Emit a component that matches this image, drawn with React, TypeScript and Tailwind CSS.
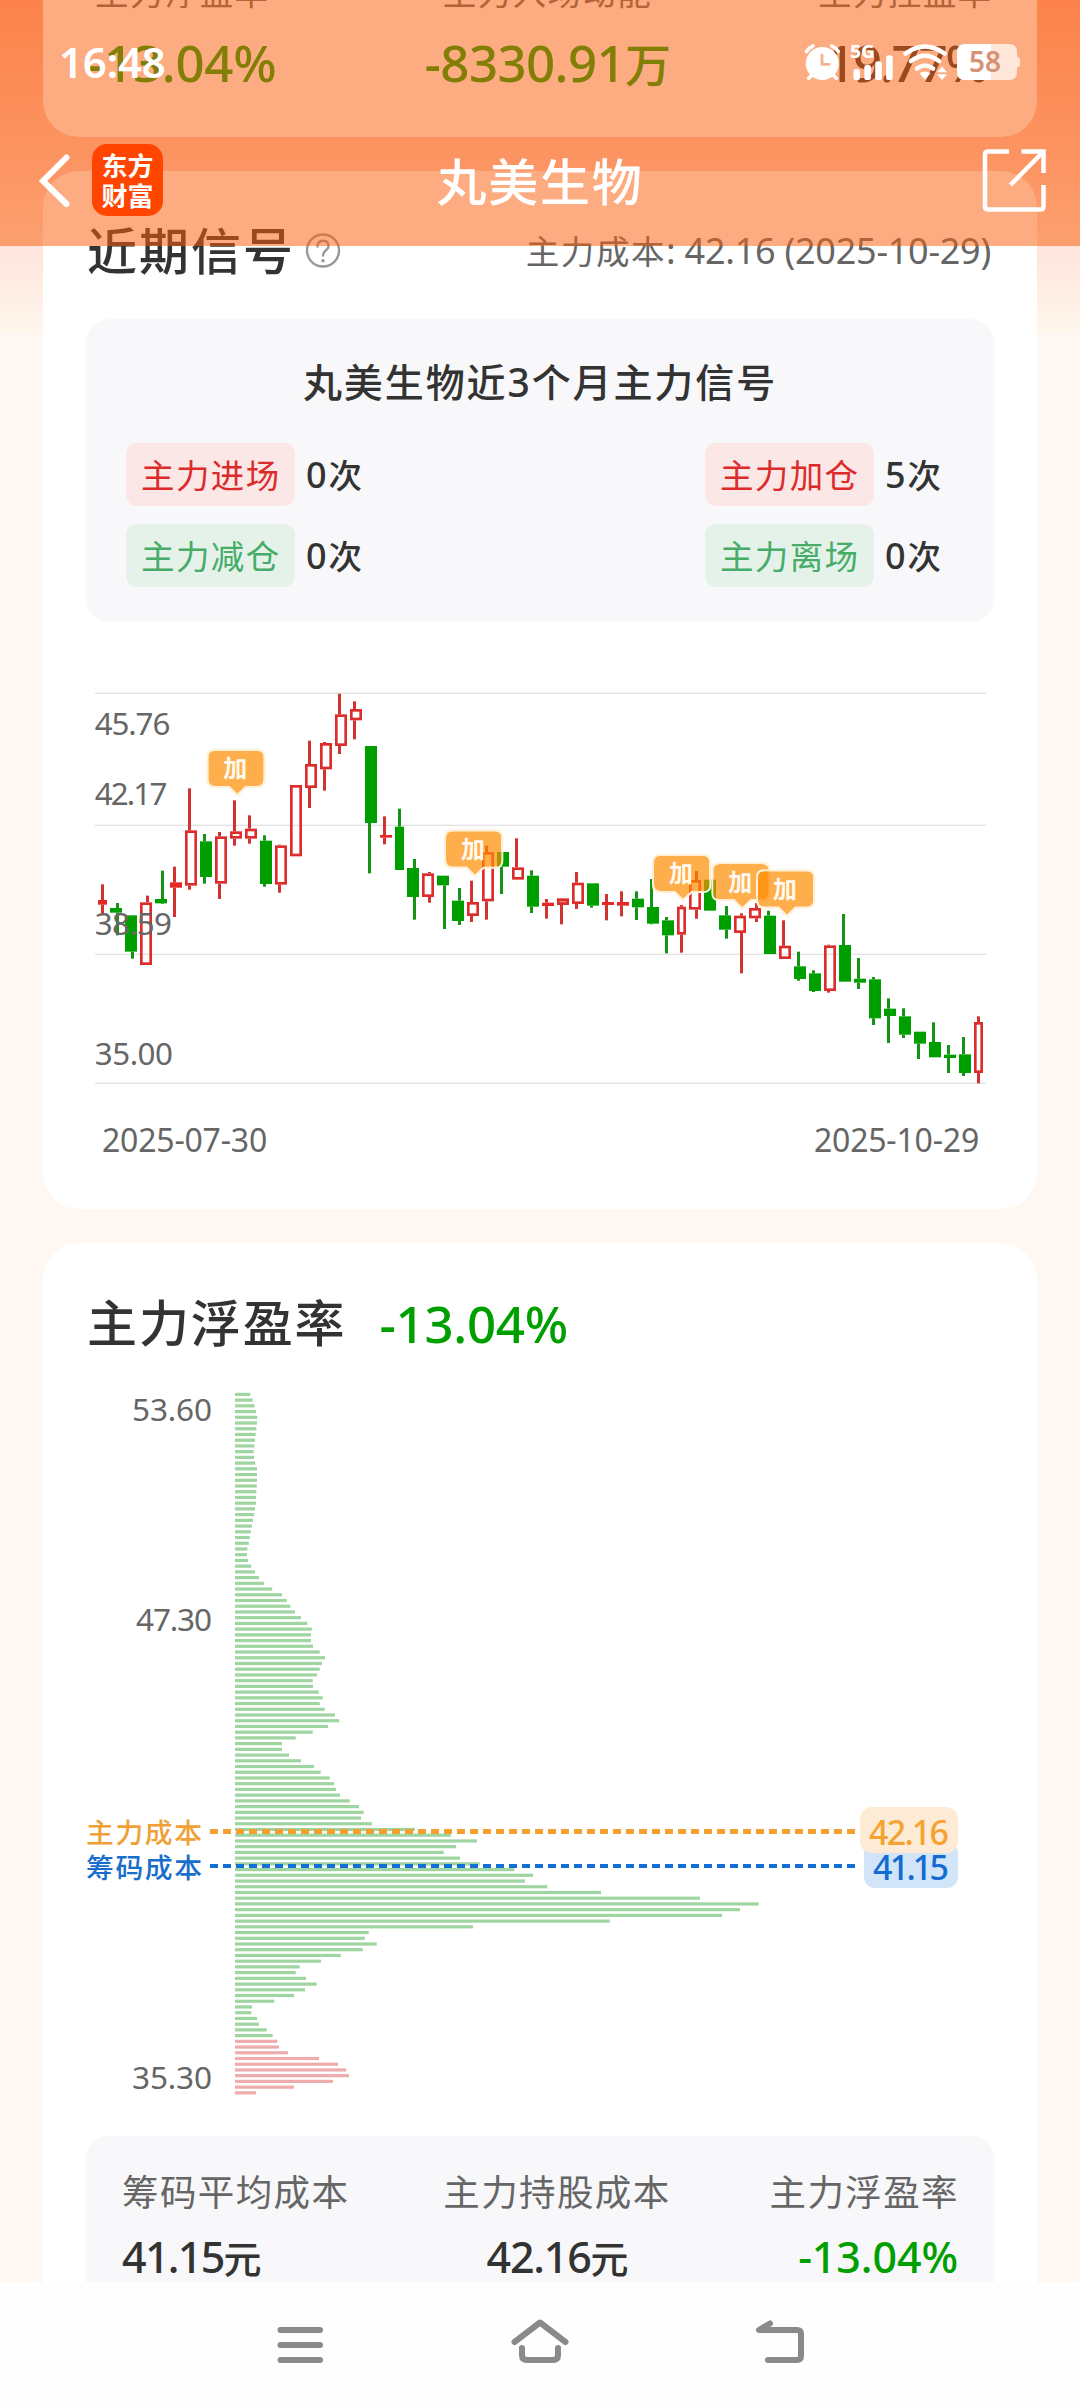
import React from "react";

type Kind = "g" | "h" | "f" | "p";
// [kind, body top, body bottom, high, low] in thirds of a pixel
const candles: [Kind, number, number, number, number][] = [
  ["f", 660, 674, 613, 706],
  ["g", 684, 698, 669, 766],
  ["g", 706, 815, 706, 836],
  ["h", 667, 855, 647, 855],
  ["g", 657, 670, 572, 672],
  ["f", 607, 623, 560, 711],
  ["h", 451, 617, 325, 629],
  ["g", 484, 591, 462, 611],
  ["h", 469, 611, 456, 657],
  ["h", 454, 476, 361, 497],
  ["h", 446, 476, 406, 491],
  ["g", 482, 612, 466, 620],
  ["h", 496, 614, 494, 638],
  ["h", 315, 529, 315, 529],
  ["h", 252, 324, 182, 384],
  ["h", 189, 268, 186, 332],
  ["h", 103, 198, 41, 222],
  ["h", 87, 121, 64, 178],
  ["g", 198, 429, 198, 580],
  ["f", 465, 473, 409, 493],
  ["g", 440, 570, 386, 570],
  ["g", 564, 651, 537, 719],
  ["h", 580, 651, 576, 668],
  ["g", 587, 616, 587, 747],
  ["g", 662, 723, 624, 735],
  ["h", 666, 708, 602, 726],
  ["h", 516, 664, 497, 719],
  ["g", 516, 560, 516, 642],
  ["h", 562, 599, 475, 599],
  ["g", 587, 680, 571, 699],
  ["f", 668, 678, 657, 716],
  ["p", 655, 675, 655, 733],
  ["h", 608, 672, 576, 687],
  ["g", 610, 677, 610, 683],
  ["f", 666, 675, 642, 721],
  ["f", 666, 677, 634, 709],
  ["g", 656, 682, 634, 720],
  ["g", 681, 731, 597, 733],
  ["g", 721, 766, 711, 820],
  ["h", 680, 764, 675, 818],
  ["h", 600, 689, 573, 716],
  ["g", 599, 692, 599, 692],
  ["g", 706, 749, 678, 776],
  ["h", 707, 759, 700, 880],
  ["h", 684, 715, 669, 726],
  ["g", 707, 822, 692, 822],
  ["h", 797, 837, 721, 837],
  ["g", 859, 897, 815, 902],
  ["g", 880, 933, 871, 936],
  ["h", 796, 933, 794, 938],
  ["g", 795, 905, 702, 905],
  ["g", 896, 908, 834, 927],
  ["g", 898, 1015, 891, 1035],
  ["g", 986, 1008, 955, 1089],
  ["g", 1009, 1064, 985, 1074],
  ["g", 1055, 1091, 1055, 1137],
  ["g", 1086, 1132, 1027, 1132],
  ["g", 1124, 1134, 1095, 1179],
  ["g", 1123, 1179, 1071, 1188],
  ["h", 1026, 1179, 1009, 1210],
];
const narrow = [0, 20, 39, 59];
const shifted = [1, 2, 3, 4, 21, 22, 23, 24, 40, 41, 42, 43, 44];
const badges = [
  [385, 212],
  [1098, 454],
  [1722, 527],
  [1900, 552],
  [2034, 574],
];
const gridLines = [40, 436, 823, 1210];
const priceLabels: [string, number, number][] = [
  ["45.76", 164, 227],
  ["42.17", 374, 218],
  ["38.59", 764, 232],
  ["35.00", 1154, 235],
];

const chips = [
  15.2, 17.6, 19.6, 21, 22.4, 22, 21.3, 20.7, 20, 19.3, 18.6, 19, 20.3, 22, 22, 22, 21.7, 21.3, 21, 21, 20, 19, 18, 17,
  15.8, 14.8, 13.8, 12.4, 12, 13, 16.2, 20, 24, 29, 37.2, 47, 51.7, 55.4, 60, 66, 72.3, 76.8, 76, 76, 78, 84.7, 90, 87,
  84.7, 82, 77.7, 78, 83.7, 87.7, 84.7, 89.7, 100, 104.3, 93, 77.7, 60.7, 47, 47, 54, 66, 79, 85.7, 94.7, 99, 101, 105,
  114.7, 124, 128.7, 126, 137, 180, 215.7, 242, 221, 208.7, 225, 244.7, 279.3, 298, 290, 312.3, 366, 465, 523.7, 505,
  487, 374.7, 238, 133.7, 129.7, 141.7, 127.7, 105.7, 86, 64.7, 60.7, 71, 81.7, 70, 59, 39.3, 17, 16.3, 22, 24, 31.7,
  37.7, 42.3, 44, 53, 84, 103, 111.3, 114, 98, 59, 21,
];

const NUM = "'Noto Sans', 'Noto Sans CJK SC', sans-serif";

function KLine() {
  return (
    <svg className="block h-[410px] w-[891px]" viewBox="45 0 2673 1230" fontFamily={NUM}>
      {gridLines.map((y) => (
        <rect key={y} x={45} y={y - 2} width={2673} height={4} fill="#e2e2e2" />
      ))}
      {candles.map(([k, t, b, h, l], i) => {
        const x = i === 0 ? 54 : 45 + 45 * i - (i > 20 ? 9 : 0) - (i > 39 ? 9 : 0);
        const w = narrow.includes(i) ? 27 : 36;
        const wx = x + (shifted.includes(i) ? 18 : 9);
        const green = k === "g";
        const wick = green ? "#149314" : "#d23230";
        return (
          <g key={i}>
            {h < t && <rect x={wx} y={h} width={9} height={t - h} fill={wick} />}
            {l > b && <rect x={wx} y={b} width={9} height={l - b} fill={wick} />}
            {green && <rect x={x} y={t} width={w} height={b - t} fill="#009f00" />}
            {k === "f" && <rect x={x} y={t} width={w} height={b - t} fill="#e82626" />}
            {(k === "h" || k === "p") && (
              <rect
                x={x + 4}
                y={t + 4}
                width={w - 8}
                height={b - t - 8}
                fill={k === "p" ? "#f67c7c" : "none"}
                stroke="#dc2d2c"
                strokeWidth={8}
              />
            )}
          </g>
        );
      })}
      {badges.map(([x, y]) => (
        <g key={x} transform={`translate(${x} ${y})`}>
          <path
            d="M20 0H146Q166 0 166 20V86Q166 106 146 106H111L87 130L63 106H20Q0 106 0 86V20Q0 0 20 0Z"
            fill="#ff8b00"
            fillOpacity={0.7}
          />
          <path
            d="M18 -3H148Q169 -3 169 18V88Q169 109 148 109H113L87 134L61 109H18Q-3 109 -3 88V18Q-3 -3 18 -3Z"
            fill="none"
            stroke="#fff1d9"
            strokeWidth={6}
          />
          <text x={81} y={80} fontSize={72} fontWeight={700} fill="#fffaf0" textAnchor="middle">
            加
          </text>
        </g>
      ))}
      {priceLabels.map(([s, y, w]) => (
        <text key={s} x={44} y={y} fontSize={94} fill="#666" textLength={w} lengthAdjust="spacing">
          {s}
        </text>
      ))}
    </svg>
  );
}

function ChipChart() {
  return (
    <svg className="block h-[736px] w-[908px]" viewBox="86 1380 908 736" fontFamily={NUM}>
      {chips.map((w, i) => (
        <rect
          key={i}
          x={235}
          y={1394.4 + i * 5.725 - 1.6}
          width={w}
          height={3.2}
          fill={i > 112 ? "#eeacac" : "#9fd5a0"}
        />
      ))}
      <g fontSize={31.5} fill="#666">
        <text x={132} y={1421} textLength={80} lengthAdjust="spacing">53.60</text>
        <text x={136} y={1631} textLength={76} lengthAdjust="spacing">47.30</text>
        <text x={132} y={2089} textLength={80} lengthAdjust="spacing">35.30</text>
      </g>
      <line x1={210} x2={858} y1={1831.5} y2={1831.5} stroke="#f5a02e" strokeWidth={5} strokeDasharray="8 5" />
      <line x1={210} x2={858} y1={1866} y2={1866} stroke="#116fd5" strokeWidth={4} strokeDasharray="8 5" />
      <g fontSize={27.8} fontWeight={500} fontFamily="'Noto Sans CJK SC', sans-serif">
        <text x={86} y={1842.5} fill="#f0a136" textLength={116} lengthAdjust="spacing">主力成本</text>
        <text x={86} y={1877.5} fill="#1a6ecb" textLength={116} lengthAdjust="spacing">筹码成本</text>
      </g>
      <rect x={864} y={1842} width={94} height={46} rx={11} fill="#d2e5f8" />
      <rect x={860} y={1807} width={98} height={46} rx={12} fill="#feebd5" />
      <g fontSize={34} fontWeight={500}>
        <text x={869} y={1844.5} fill="#f5a231" textLength={80} lengthAdjust="spacing">42.16</text>
        <text x={873} y={1879.5} fill="#136cd0" textLength={76} lengthAdjust="spacing">41.15</text>
      </g>
    </svg>
  );
}

function Signal({ label, count, tone }: { label: string; count: string; tone: "red" | "green" }) {
  const color = tone === "red" ? "bg-[#fae7e6] text-[#dd2b2b]" : "bg-[#e5f2ea] text-[#46ac68]";
  return (
    <div className="flex h-[63px] items-center gap-[11px]">
      <div
        className={`h-[63px] w-[169px] rounded-[11px] pl-[15px] text-[33.5px] leading-[64px] tracking-[1.4px] ${color}`}
      >
        {label}
      </div>
      <div className="text-[33.5px] leading-[64px] font-medium text-[#333]">
        <span className="mr-[2px] text-[36px]">{count}</span>次
      </div>
    </div>
  );
}

function StatusIcons() {
  return (
    <svg className="block h-[40px] w-[220px]" viewBox="802 42 220 40" fill="#fff" fontFamily={NUM}>
      <circle cx={822.3} cy={63.5} r={16.6} />
      <g stroke="#fff" strokeWidth={3.6} strokeLinecap="round" fill="none">
        <path d="M806.5 51.5Q808.5 48 813 45.8" />
        <path d="M838.3 51.5Q836.3 48 831.8 45.8" />
        <path d="M811.5 75.5L808.7 78.2M833.5 75.5L836.3 78.2" />
      </g>
      <path d="M822 55V64.3H829" fill="none" stroke="#f6b18f" strokeWidth={2.8} strokeLinecap="round" />
      <text x={850} y={58} fontSize={17.5} fontWeight={800} textLength={25} lengthAdjust="spacingAndGlyphs">5G</text>
      <rect x={853.4} y={69} width={6.6} height={11} rx={2.6} />
      <rect x={864.3} y={65} width={6.6} height={15} rx={2.6} />
      <rect x={875.2} y={61.3} width={6.6} height={18.7} rx={2.6} />
      <rect x={886.1} y={55.3} width={6.6} height={24.7} rx={2.6} />
      <g fill="none" stroke="#fff" strokeWidth={4.6} strokeLinecap="round">
        <path d="M905.5 53.5Q925 39.5 944.5 53.5" />
        <path d="M911 61Q925 50.5 939 61" />
        <path d="M917 68.5Q925 62.5 933 68.5" />
      </g>
      <path d="M919.5 73Q925 70 930.5 73L926.3 78.5Q925 80 923.7 78.5Z" />
      <path d="M942 66.5L947 72.3H937ZM942 80L947 74.3H937Z" />
      <path d="M965 44H991V80H965Q957 80 957 72V52Q957 44 965 44Z" />
      <path
        d="M991 44H1009Q1017 44 1017 52V56.5Q1020 57 1020 60V64Q1020 67 1017 67.5V72Q1017 80 1009 80H991Z"
        fillOpacity={0.7}
      />
      <text x={969} y={71.7} fontSize={28} fontWeight={600} fill="#d59277">58</text>
    </svg>
  );
}

export default function App() {
  return (
    <div className="relative flex h-[2408px] w-[1080px] flex-col overflow-hidden bg-[#fff8f2] font-['Noto_Sans','Noto_Sans_CJK_SC',sans-serif]">
      <main className="flex min-h-0 flex-1 flex-col gap-[34px] overflow-hidden bg-[linear-gradient(180deg,#ffa890_0px,#ffe4dc_246px,#fff6ec_330px,#fff8f2_335px)] px-[43px]">
        <section className="flex h-[137px] shrink-0 justify-between overflow-hidden rounded-b-[36px] bg-white pr-[46px] pl-[46px]">
          <div className="-mt-[31px] w-[190px]">
            <div className="pl-[6px] text-[33.5px] leading-[46px] tracking-[1.4px] whitespace-nowrap text-[#666]">主力浮盈率</div>
            <div className="mt-[19px] -ml-[1px] text-[51px] leading-[56px] font-medium tracking-[-0.3px] whitespace-nowrap text-[#009f00]">-13.04%</div>
          </div>
          <div className="-mt-[31px] w-[252px] text-center">
            <div className="text-[33.5px] leading-[46px] tracking-[1.4px] whitespace-nowrap text-[#666]">主力入场动能</div>
            <div className="mt-[19px] text-[51px] leading-[56px] font-medium tracking-[-0.6px] whitespace-nowrap text-[#009f00]">
              -8330.91<span className="text-[46px]">万</span>
            </div>
          </div>
          <div className="-mt-[31px] w-[175px]">
            <div className="pl-[2px] text-[33.5px] leading-[46px] tracking-[1.4px] whitespace-nowrap text-[#666]">主力控盘率</div>
            <div className="mt-[19px] pl-[10px] text-[51px] leading-[56px] font-medium tracking-[-2.2px] whitespace-nowrap text-[#333]">19.77%</div>
          </div>
        </section>

        <section className="flex h-[1038px] shrink-0 flex-col rounded-[36px] bg-white px-[43px]">
          <div className="mt-[51px] flex h-[58px] items-center">
            <h2 className="pl-px text-[50px] leading-[58px] font-medium tracking-[2px] whitespace-nowrap text-[#333]">近期信号</h2>
            <svg className="ml-[10px] h-[36px] w-[36px]" viewBox="0 0 36 36" fill="none" stroke="#999" strokeWidth={2.4}>
              <circle cx={18} cy={17.5} r={16} />
              <path d="M12.5 13.5Q12.5 7.800 18 7.800Q23.5 7.8 23.5 13Q23.5 15.5 20.5 17.7Q18 19.5 18 22.5" strokeLinecap="round" />
              <circle cx={18} cy={27.8} r={1.8} fill="#999" stroke="none" />
            </svg>
            <div className="ml-auto pr-[3px] text-[36px] leading-[58px] tracking-[-0.25px] whitespace-nowrap text-[#666]">
              <span className="text-[33.5px] tracking-[1.6px]">主力成本</span>: 42.16 (2025-10-29)
            </div>
          </div>

          <div className="mt-[39px] h-[303px] shrink-0 rounded-[24px] bg-[#f8f8fa]">
            <h3 className="mt-[34px] text-center text-[39px] leading-[58px] font-medium tracking-[1.9px] text-[#333]">
              丸美生物近3个月主力信号
            </h3>
            <div className="mt-[32px] flex justify-between pr-[53px] pl-[40px]">
              <div className="flex flex-col gap-[18px]">
                <Signal label="主力进场" count="0" tone="red" />
                <Signal label="主力减仓" count="0" tone="green" />
              </div>
              <div className="flex flex-col gap-[18px]">
                <Signal label="主力加仓" count="5" tone="red" />
                <Signal label="主力离场" count="0" tone="green" />
              </div>
            </div>
          </div>

          <div className="mt-[58px] pl-[9px]">
            <KLine />
          </div>
          <div className="mt-[28px] flex justify-between pr-[15px] pl-[16px] text-[32px] leading-[44px] tracking-[-0.2px] text-[#666]">
            <span>2025-07-30</span>
            <span>2025-10-29</span>
          </div>
        </section>

        <section className="flex h-[1140px] shrink-0 flex-col rounded-t-[36px] bg-white px-[43px]">
          <div className="mt-[50px] flex h-[60px] items-center gap-[33px]">
            <h2 className="pl-px text-[50px] leading-[60px] font-medium tracking-[1.9px] text-[#333]">主力浮盈率</h2>
            <span className="text-[51px] leading-[60px] font-medium tracking-[-0.3px] text-[#009f00]">-13.04%</span>
          </div>
          <div className="mt-[27px]">
            <ChipChart />
          </div>
          <div className="mt-[20px] flex h-[220px] shrink-0 justify-between rounded-t-[22px] bg-[#f8f8fa] px-[36px] pt-[33px] whitespace-nowrap">
            <div>
              <div className="text-[36.5px] leading-[46px] tracking-[1.4px] text-[#666]">筹码平均成本</div>
              <div className="mt-[19px] text-[43px] leading-[46px] font-medium tracking-[-1.7px] text-[#333]">
                41.15<span className="text-[38px]">元</span>
              </div>
            </div>
            <div className="-ml-[5px] text-center">
              <div className="text-[36.5px] leading-[46px] tracking-[1.4px] text-[#666]">主力持股成本</div>
              <div className="mt-[19px] text-[43px] leading-[46px] font-medium tracking-[-1.2px] text-[#333]">
                42.16<span className="text-[38px]">元</span>
              </div>
            </div>
            <div className="text-right">
              <div className="-mr-[1px] text-[36.5px] leading-[46px] tracking-[1.4px] text-[#666]">主力浮盈率</div>
              <div className="mt-[19px] text-[43px] leading-[46px] font-medium tracking-[-0.1px] text-[#009f00]">-13.04%</div>
            </div>
          </div>
        </section>
      </main>

      <header className="absolute inset-x-0 top-0 flex h-[246px] flex-col bg-[rgba(249,95,11,0.52)] text-white">
        <div className="mt-[40px] flex h-[44px] items-center justify-between pr-[58px] pl-[59px]">
          <span className="text-[42px] leading-[44px] font-semibold tracking-[-0.2px]">16:48</span>
          <StatusIcons />
        </div>
        <div className="mt-[60px] grid h-[72px] grid-cols-[1fr_auto_1fr] items-center pr-[34px] pl-[39px]">
          <div className="flex items-center gap-[22px]">
            <svg className="h-[54px] w-[31px]" viewBox="0 0 31 54" fill="none" stroke="#fff" strokeWidth={6}>
              <path d="M27.5 4.500L4 28L27.5 51" strokeLinecap="round" strokeLinejoin="miter" />
            </svg>
            <div className="flex h-[72px] w-[71px] flex-col items-center justify-center rounded-[15px] bg-[#ff4500] pb-px font-['Noto_Sans_CJK_SC',sans-serif] text-[26px] leading-[30px] font-bold">
              <span>东方</span>
              <span>财富</span>
            </div>
          </div>
          <h1 className="mr-[5px] text-[50px] leading-[60px] font-medium tracking-[1.7px]">
            <span className="relative top-[2px]">丸美生物</span>
          </h1>
          <svg className="h-[64px] w-[64px] justify-self-end" viewBox="982 148 64 64" fill="none" stroke="#fff" strokeWidth={4.5}>
            <path d="M1009 151.5H988Q985 151.5 985 154.5V206.5Q985 209.5 988 209.5H1040.5Q1043.5 209.5 1043.5 206.5V185" />
            <path d="M1021.5 151.5H1043.5V173M1043 152L1010.5 185" />
          </svg>
        </div>
      </header>

      <nav className="relative h-[126px] shrink-0 bg-[#fefefe]">
        <svg
          className="block h-[126px] w-[1080px]"
          viewBox="0 2282 1080 126"
          fill="none"
          stroke="#8a8a8a"
          strokeWidth={6}
          strokeLinecap="round"
          strokeLinejoin="round"
        >
          <path d="M280.5 2330H320M280.5 2345H320M280.5 2360H320" />
          <path d="M514.5 2342L540 2322.5L565.5 2342M522 2348V2355Q522 2360 527 2360H553Q558 2360 558 2355V2348" />
          <path d="M770 2323.5L759 2330H797Q801 2330 801 2334V2356Q801 2360 797 2360H768" />
        </svg>
      </nav>
    </div>
  );
}
